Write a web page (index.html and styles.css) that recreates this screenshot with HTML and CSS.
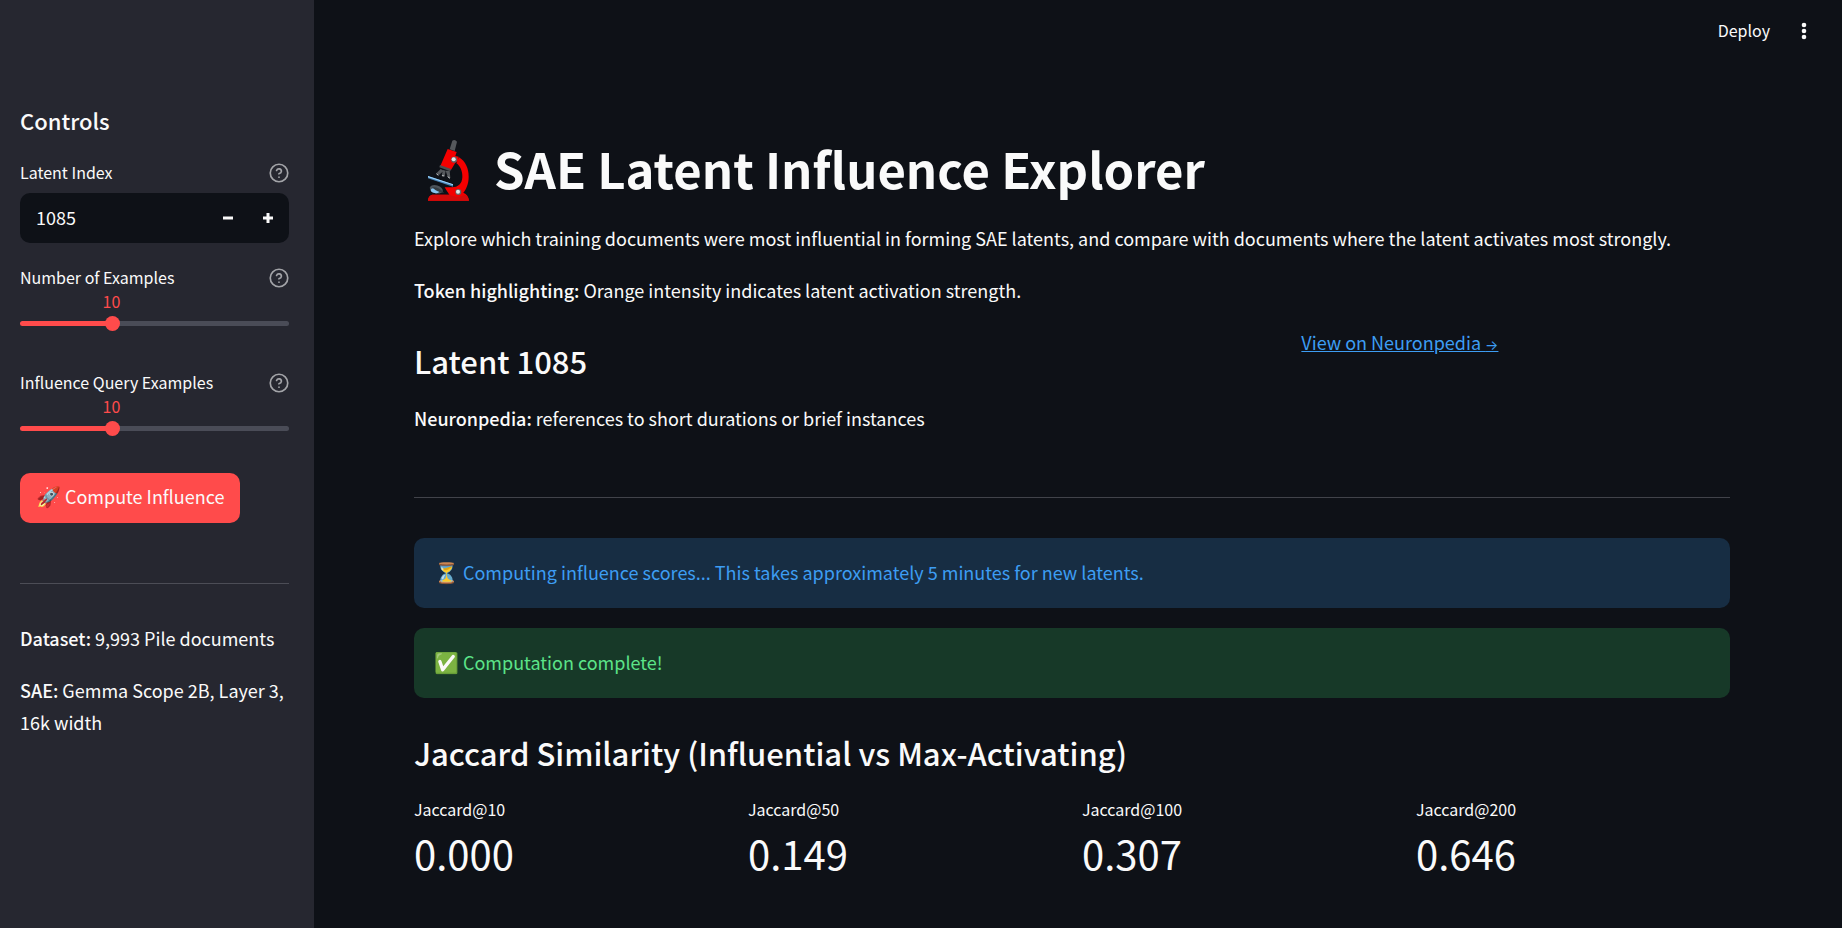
FILE: index.html
```html
<!DOCTYPE html>
<html lang="en">
<head>
<meta charset="utf-8">
<title>SAE Latent Influence Explorer</title>
<link rel="stylesheet" href="styles.css">
</head>
<body>
<svg class="defs" aria-hidden="true">
  <symbol id="help" viewBox="0 0 24 24"><g fill="none" stroke="currentColor" stroke-width="2" stroke-linecap="round" stroke-linejoin="round"><circle cx="12" cy="12" r="10.5"/><path d="M9.1 9a3 3 0 0 1 5.8 1c0 2-3 3-3 3M12 17h.01"/></g></symbol>
</svg>
<div class="app">
  <aside class="sidebar">
    <h2 class="sidebar-title">Controls</h2>
    <div class="field">
      <div class="field-head"><label for="latent">Latent Index</label><button class="help" aria-label="Help for latent index"><svg><use href="#help"/></svg></button></div>
      <div class="number">
        <input id="latent" type="text" inputmode="numeric" value="1085">
        <button class="step" aria-label="Decrease"><svg viewBox="0 0 10 10"><path d="M0 3.5h10v3H0z"/></svg></button>
        <button class="step" aria-label="Increase"><svg viewBox="0 0 10 10"><path d="M3.500 0h3v3.500H10v3H6.500V10h-3V6.500H0v-3h3.500z"/></svg></button>
      </div>
    </div>
    <div class="field">
      <div class="field-head"><label for="examples">Number of Examples</label><button class="help" aria-label="Help for number of examples"><svg><use href="#help"/></svg></button></div>
      <div class="slider"><output for="examples">10</output><input id="examples" type="range" min="5" max="20" value="10"></div>
    </div>
    <div class="field">
      <div class="field-head"><label for="query">Influence Query Examples</label><button class="help" aria-label="Help for influence query examples"><svg><use href="#help"/></svg></button></div>
      <div class="slider"><output for="query">10</output><input id="query" type="range" min="5" max="20" value="10"></div>
    </div>
    <button class="primary"><span class="emoji">🚀</span> Compute Influence</button>
    <hr>
    <div class="facts">
      <p><strong>Dataset:</strong> 9,993 Pile documents</p>
      <p><strong>SAE:</strong> Gemma Scope 2B, Layer 3, 16k width</p>
    </div>
  </aside>
  <div class="page">
    <header class="toolbar">
      <button class="deploy">Deploy</button>
      <button class="menu" aria-label="Main menu"><svg viewBox="0 0 20 20"><circle cx="10" cy="4" r="2.300"/><circle cx="10" cy="10" r="2.300"/><circle cx="10" cy="16" r="2.300"/></svg></button>
    </header>
    <main class="content">
      <h1>
        <svg class="microscope" viewBox="12 15 210 198" role="img" aria-label="Microscope">
          <path d="M54 212c0-10 6-18 16-18h48c-6-9-10-14-14-22h22c18 0 30-10 31-30 1-18-6-34-18-42l8-18c20 12 29 34 29 58 0 22-8 38-16 48 10 4 16 12 17 24z" fill="#f40000"/>
          <path d="M54 212c0-10 6-18 16-18h48c12 6 34 8 48 0 6 4 10 10 11 18z" fill="#d40a0a"/>
          <path d="M113 57l27 9-4 12 10 2-2 12-8 6-13 22-32-12z" fill="#f40000"/>
          <path d="M127 32q8-5 14 3l-7 28-15-5z" fill="#55585c"/>
          <path d="M90 105l33 12-2 7-33-12z" fill="#4c4e51"/>
          <path d="M92 117l-12 12 6 7 15-14zM99 120l-4 17 9 1 3-16zM107 122l6 18 8 4-2-22z" fill="#56595d"/>
          <path d="M79 131l6 5M96 137l7 1M113 140l7 5" stroke="#c9cdd0" stroke-width="3"/>
          <path d="M54 138l75 25v7L54 145z" fill="#4a83b5"/><path d="M54 138l75 25v3L54 142z" fill="#9bd5ff"/>
          <ellipse cx="79" cy="178" rx="20" ry="12" fill="#4c535a" transform="rotate(16 79 178)"/>
          <ellipse cx="75" cy="182" rx="13" ry="7" fill="#86c4ef" transform="rotate(12 75 182)"/>
          <path d="M66 172q18-3 36 16-18 1-36-16z" fill="#353c42"/>
          <circle cx="132" cy="89" r="9" fill="#62666a"/><circle cx="131" cy="88" r="6" fill="#e2e4e5"/>
          <circle cx="145" cy="186" r="9" fill="#62666a"/><circle cx="144" cy="185" r="6" fill="#e2e4e5"/>
        </svg>
        SAE Latent Influence Explorer</h1>
      <p>Explore which training documents were most influential in forming SAE latents, and compare with documents where the latent activates most strongly.</p>
      <p><strong>Token highlighting:</strong> Orange intensity indicates latent activation strength.</p>
      <div class="split">
        <div class="wide">
          <h2>Latent 1085</h2>
          <p><strong>Neuronpedia:</strong> references to short durations or brief instances</p>
        </div>
        <div class="narrow"><a href="#">View on Neuronpedia <span class="arrow">→</span></a></div>
      </div>
      <hr>
      <div class="alert info"><span class="emoji">⏳</span> Computing influence scores... This takes approximately 5 minutes for new latents.</div>
      <div class="alert success"><span class="emoji">✅</span> Computation complete!</div>
      <h2>Jaccard Similarity (Influential vs Max-Activating)</h2>
      <dl class="metrics">
        <div><dt>Jaccard@10</dt><dd>0.000</dd></div>
        <div><dt>Jaccard@50</dt><dd>0.149</dd></div>
        <div><dt>Jaccard@100</dt><dd>0.307</dd></div>
        <div><dt>Jaccard@200</dt><dd>0.646</dd></div>
      </dl>
    </main>
  </div>
</div>
</body>
</html>
```
FILE: styles.css
```css
* { box-sizing: border-box; }
body {
  margin: 0;
  background: #0e1117;
  color: #fafafa;
  font: 400 18px/32px "Noto Sans CJK SC", "Noto Sans", sans-serif;
}
h1, h2, p, dl, dd { margin: 0; }
button, input { font: inherit; color: inherit; border: 0; background: none; padding: 0; margin: 0; }
button { cursor: pointer; }
hr { width: 100%; height: 1px; margin: 40px 0; border: 0; background: #41434a; }
h2, strong { font-weight: 500; }
.defs { display: none; }
.emoji { font-family: "Noto Color Emoji", sans-serif; font-size: 20px; line-height: 1; }
.app { display: flex; min-height: 100vh; }

.sidebar { flex: 0 0 314px; min-width: 0; padding: 102px 25px 40px 20px; background: #262730; }
.sidebar-title { padding: 0 0 20px; font-size: 22px; line-height: 36px; }
.field { margin-bottom: 20px; font-size: 16px; }
.field-head { display: flex; justify-content: space-between; align-items: center; height: 28px; margin-bottom: 7px; line-height: 28px; }
.help { display: flex; padding-top: 2px; color: #a3a4a8; }
.help svg { width: 20px; height: 20px; }
.number { display: flex; height: 50px; padding-right: 1px; border-radius: 10px; background: #0e1117; overflow: hidden; font-size: 18px; }
.number input { flex: 1; width: 100%; min-width: 0; padding: 0 0 3px 16px; outline: 0; }
.step { display: flex; align-items: center; justify-content: center; flex: 0 0 40px; fill: #fafafa; }
.step svg { width: 10px; height: 10px; }
.slider { display: flex; flex-direction: column; height: 50px; }
.slider output { width: 68%; height: 14px; margin-top: -4px; line-height: 14px; text-align: center; color: #ff4b4b; }
.slider input { appearance: none; width: 100%; height: 15px; margin-top: 8px; }
.slider input::-webkit-slider-runnable-track { height: 5px; border-radius: 3px; background: linear-gradient(to right, #ff4b4b 34%, #4a4c57 34%); }
.slider input::-webkit-slider-thumb { appearance: none; width: 15px; height: 15px; margin-top: -5px; border-radius: 50%; background: #ff4b4b; }
.primary { height: 50px; padding: 0 16px 4px; border-radius: 10px; background: #ff4b4b; white-space: nowrap; }
.sidebar hr { margin: 60px 0 38px; background: #4c4d56; }
.facts { display: grid; gap: 20px; }

.page { flex: 1; min-width: 0; }
.toolbar { display: flex; justify-content: flex-end; align-items: center; gap: 24px; height: 62px; padding-right: 28px; font-size: 16px; }
.deploy { padding-bottom: 2px; }
.menu { display: flex; fill: #fafafa; }
.menu svg { width: 20px; height: 20px; }
.content { display: flex; flex-direction: column; padding: 56px 112px 40px 100px; }
h1 { display: flex; gap: 10px; padding: 17px 0 21px; font-size: 49px; line-height: 66px; font-weight: 700; }
.microscope { flex: none; width: 70px; height: 66px; }
.content > p { margin-bottom: 20px; }
.content h2 { padding: 14px 0 20px; font-size: 31px; line-height: 42px; }
.split { display: flex; gap: 20px; margin-bottom: 23px; }
.wide { flex: 1 1 calc(66.6667% - 20px); }
.narrow { flex: 1 1 calc(33.3333% - 20px); }
a { color: #3d9df3; text-decoration: underline; }
.arrow { font: 14px "Inter", sans-serif; }
.alert { margin-bottom: 20px; padding: 18px 20px 20px; border-radius: 10px; }
.info { background: #172d43; color: #3d9df3; }
.success { background: #173928; color: #5ce488; }
.metrics { display: flex; gap: 20px; }
.metrics div { flex: 1; }
dt { padding-top: 3px; font-size: 16px; line-height: 24px; }
dd { padding-top: 5px; font-size: 40px; line-height: 54px; }
```
